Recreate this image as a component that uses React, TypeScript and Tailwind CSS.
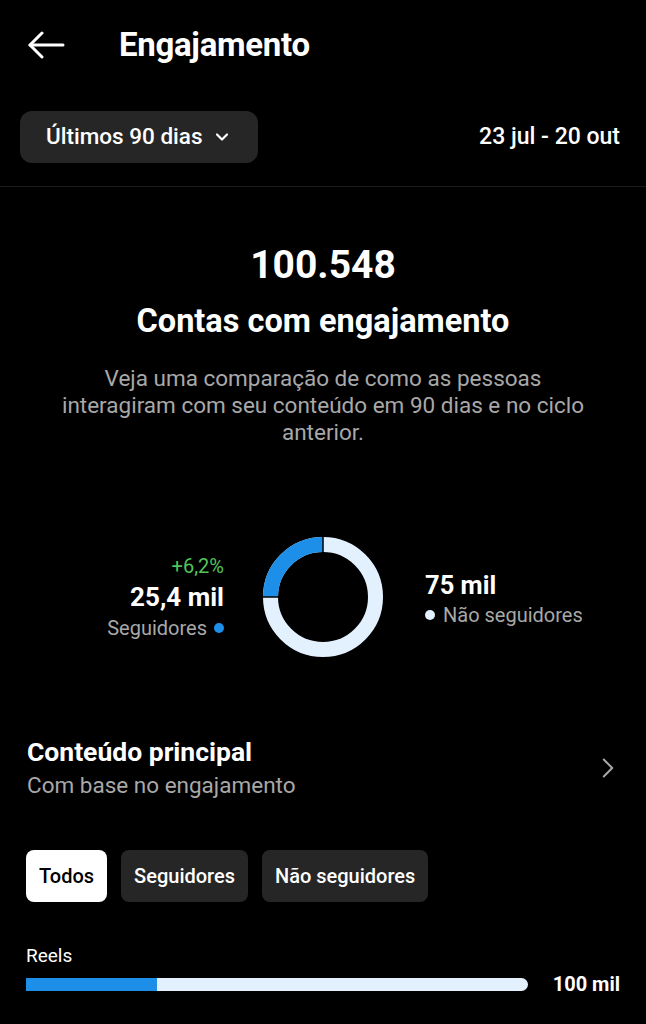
import { ChevronDown, ChevronRight } from "lucide-react"

const tabs = ["Todos", "Seguidores", "Não seguidores"]

function BackArrow() {
  return (
    <svg width="38" height="28" viewBox="0 0 38 28" fill="none" stroke="white" strokeWidth="3" strokeLinecap="round" strokeLinejoin="round">
      <path d="M36 14H3" />
      <path d="M15 2L3 14L15 26" />
    </svg>
  )
}

function Donut() {
  // 25% seguidores, drawn from 12 o'clock counter-clockwise
  const r = 52.5
  const c = 2 * Math.PI * r
  return (
    <svg width="122" height="122" viewBox="0 0 122 122">
      <circle cx="61" cy="61" r={r} fill="none" stroke="#e3f1ff" strokeWidth="15" />
      <circle
        cx="61"
        cy="61"
        r={r}
        fill="none"
        stroke="#1d8fe8"
        strokeWidth="15"
        strokeDasharray={`${c * 0.25} ${c}`}
        transform="rotate(180 61 61)"
      />
      <line x1="61" y1="1" x2="61" y2="17" stroke="#000" strokeWidth="1.5" />
      <line x1="1" y1="61" x2="17" y2="61" stroke="#000" strokeWidth="1.5" />
    </svg>
  )
}

export default function App() {
  return (
    <div className="min-h-[1024px] w-[646px] bg-black text-white font-['Roboto',sans-serif] overflow-hidden">
      {/* Header */}
      <div className="flex items-center h-[90px] pl-[27px]">
        <BackArrow />
        <h1 className="ml-[54px] text-[33px] font-bold tracking-[-0.3px]">Engajamento</h1>
      </div>

      {/* Period */}
      <div className="flex items-center justify-between pl-[20px] pr-[26px] pt-[21px] pb-[23px] border-b border-[#1c1c1c]">
        <button className="flex items-center gap-[9px] h-[52px] pl-[26px] pr-[26px] rounded-[12px] bg-[#262626] text-[22.5px] font-medium">
          Últimos 90 dias
          <ChevronDown className="w-[20px] h-[20px]" strokeWidth={2.6} />
        </button>
        <span className="text-[23px] font-medium">23 jul - 20 out</span>
      </div>

      {/* Summary */}
      <div className="flex flex-col items-center text-center pt-[56px]">
        <div className="text-[39px] font-bold leading-[44px]">100.548</div>
        <div className="mt-[14px] text-[32.5px] font-bold leading-[40px]">Contas com engajamento</div>
        <p className="mt-[24px] max-w-[540px] text-[22.5px] leading-[27px] text-[#a8a8a8]">
          Veja uma comparação de como as pessoas interagiram com seu conteúdo em 90 dias e no ciclo anterior.
        </p>
      </div>

      {/* Donut */}
      <div className="flex items-center justify-center mt-[90px]">
        <div className="w-[200px] flex flex-col items-end pr-[38px]">
          <span className="h-[31px] flex items-center text-[20px] text-[#52c45a]">+6,2%</span>
          <span className="h-[31px] flex items-center text-[26px] font-bold">25,4 mil</span>
          <span className="h-[31px] flex items-center gap-[7px] text-[20px] text-[#a8a8a8]">
            Seguidores
            <span className="w-[10px] h-[10px] rounded-full bg-[#1d8fe8]" />
          </span>
        </div>
        <Donut />
        <div className="w-[200px] flex flex-col items-start pl-[41px] pt-[6px]">
          <span className="h-[30px] flex items-center text-[25.5px] font-bold">75 mil</span>
          <span className="h-[30px] flex items-center gap-[8px] text-[20px] text-[#a8a8a8]">
            <span className="w-[10px] h-[10px] rounded-full bg-[#e3f1ff]" />
            Não seguidores
          </span>
        </div>
      </div>

      {/* Conteúdo principal */}
      <div className="flex items-center justify-between px-[27px] mt-[78px]">
        <div className="flex flex-col">
          <span className="text-[26.5px] font-bold leading-[32px]">Conteúdo principal</span>
          <span className="text-[22.5px] text-[#a8a8a8] leading-[30px] mt-[2px]">Com base no engajamento</span>
        </div>
        <ChevronRight className="w-[34px] h-[34px] text-[#a8a8a8] mr-[-6px]" strokeWidth={1.4} />
      </div>

      {/* Tabs */}
      <div className="flex gap-[14px] px-[26px] mt-[50px]">
        {tabs.map((t, i) => (
          <button
            key={t}
            className={`h-[52px] px-[13px] rounded-[8px] text-[20px] font-medium ${
              i === 0 ? "bg-white text-black" : "bg-[#262626] text-white"
            }`}
          >
            {t}
          </button>
        ))}
      </div>

      {/* Reels */}
      <div className="px-[26px] mt-[42px]">
        <div className="text-[19px] leading-[24px]">Reels</div>
        <div className="flex items-center mt-[10px] h-[13px]">
          <div className="flex w-[502px] h-[13px] rounded-r-full overflow-hidden bg-[#e3f1ff]">
            <div className="h-full bg-[#1d8fe8]" style={{ width: `${(131 / 502) * 100}%` }} />
          </div>
          <span className="ml-auto text-[20px] font-bold leading-[13px]">100 mil</span>
        </div>
      </div>
    </div>
  )
}
